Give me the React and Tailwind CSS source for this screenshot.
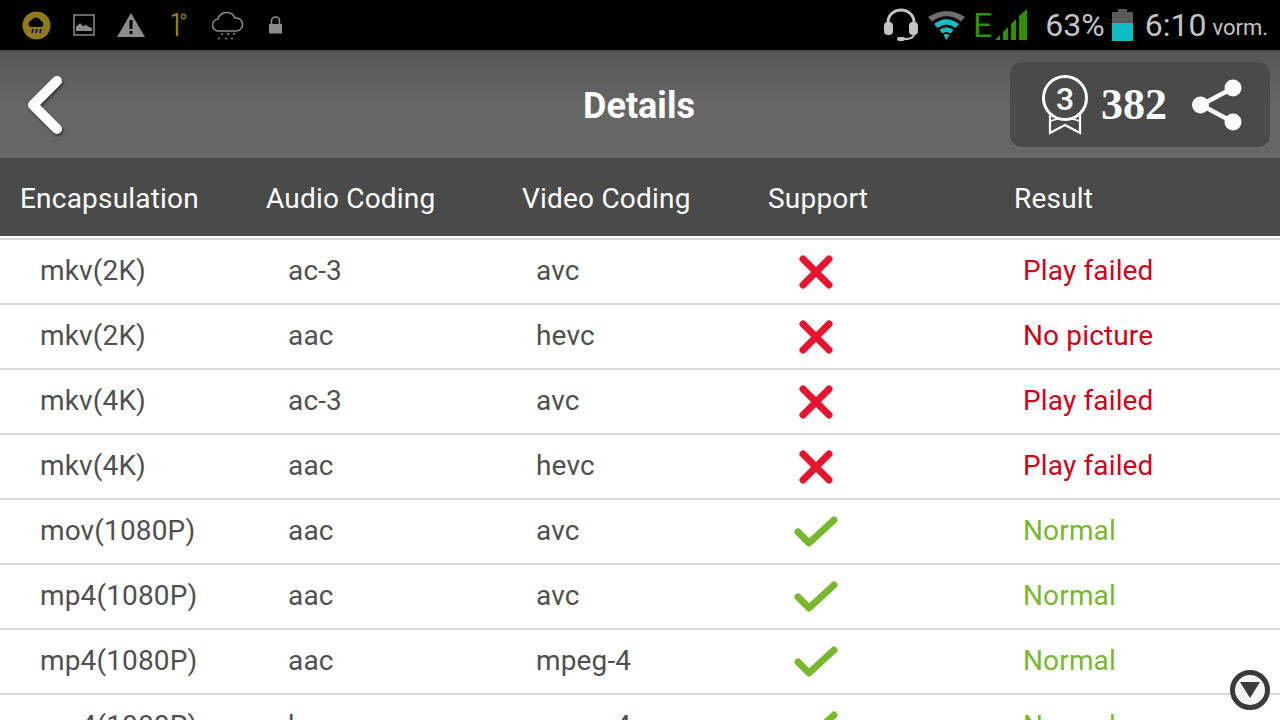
import React from 'react';

const rows = [
  ['mkv(2K)', 'ac-3', 'avc', false, 'Play failed'],
  ['mkv(2K)', 'aac', 'hevc', false, 'No picture'],
  ['mkv(4K)', 'ac-3', 'avc', false, 'Play failed'],
  ['mkv(4K)', 'aac', 'hevc', false, 'Play failed'],
  ['mov(1080P)', 'aac', 'avc', true, 'Normal'],
  ['mp4(1080P)', 'aac', 'avc', true, 'Normal'],
  ['mp4(1080P)', 'aac', 'mpeg-4', true, 'Normal'],
  ['mp4(1080P)', 'he-aac', 'mpeg-4', true, 'Normal'],
];

const Cross = () => (
  <svg width="36" height="36" viewBox="0 0 36 36">
    <path d="M5 5 L31 31 M31 5 L5 31" stroke="#e5142f" strokeWidth="7" strokeLinecap="round" />
  </svg>
);

const Check = () => (
  <svg width="44" height="34" viewBox="0 0 44 34">
    <path d="M4 17 L15 28 L40 5" fill="none" stroke="#77b82e" strokeWidth="7" strokeLinecap="round" strokeLinejoin="round" />
  </svg>
);

const StatusLeft = () => (
  <div className="flex items-center h-full">
    <svg className="ml-[22px]" width="29" height="29" viewBox="0 0 29 29">
      <circle cx="14.5" cy="14.5" r="14" fill="#8f7a1e" />
      <path d="M8 16 a4 4 0 0 1 2-7 a5 5 0 0 1 9 1 a3.5 3.5 0 0 1 1 6 Z" fill="#000" />
      <path d="M11 18 l-1 4 M15 18 l-1 4 M19 18 l-1 4" stroke="#000" strokeWidth="1.5" />
    </svg>
    <svg className="ml-[22px]" width="22" height="22" viewBox="0 0 22 22">
      <rect x="1" y="1" width="20" height="20" fill="none" stroke="#8c8c8c" strokeWidth="1.5" />
      <path d="M3 17 L3 13 L7 9 L10 12 L13 11 L16 13 L19 14 L19 17 Z" fill="#8c8c8c" />
    </svg>
    <svg className="ml-[22px]" width="28" height="25" viewBox="0 0 28 25">
      <path d="M14 0 L28 24 L0 24 Z" fill="#8c8c8c" />
      <rect x="12.5" y="7" width="3" height="9" fill="#000" />
      <rect x="12.5" y="18" width="3" height="3" fill="#000" />
    </svg>
    <svg className="ml-[26px]" width="16" height="24" viewBox="0 0 16 24">
      <path d="M1 3 L6 1 L6 23" fill="none" stroke="#8f7a1e" strokeWidth="2.4" />
      <circle cx="12.5" cy="3.5" r="2.2" fill="none" stroke="#8f7a1e" strokeWidth="1.4" />
    </svg>
    <svg className="ml-[25px]" width="32" height="30" viewBox="0 0 32 30">
      <path d="M7 21 a6 6 0 0 1-1-12 a9 9 0 0 1 17 -1 a6.5 6.5 0 0 1 2 13 Z" fill="none" stroke="#8c8c8c" strokeWidth="1.5" />
      <path d="M9 24 h2 M15 24 h2 M21 24 h2 M6 28.500 h2 M13 28.500 h2 M19 28.500 h2" stroke="#8c8c8c" strokeWidth="1.6" />
    </svg>
    <svg className="ml-[24px]" width="15" height="18" viewBox="0 0 15 18">
      <path d="M3.500 8 V5 a4 4 0 0 1 8 0 V8" fill="none" stroke="#8c8c8c" strokeWidth="1.6" />
      <rect x="1" y="8" width="13" height="9.500" fill="#8c8c8c" />
    </svg>
  </div>
);

const StatusRight = () => (
  <div className="flex items-center h-full">
    <svg width="36" height="34" viewBox="0 0 36 34">
      <path d="M5 18 V14 a13 12 0 0 1 26 0 V18" fill="none" stroke="#c4c4c4" strokeWidth="3" />
      <rect x="1" y="14" width="9" height="13" rx="4" fill="#c4c4c4" />
      <rect x="26" y="14" width="9" height="13" rx="4" fill="#c4c4c4" />
      <path d="M31 26 q0 4 -7 5 h-6" fill="none" stroke="#c4c4c4" strokeWidth="2" />
      <rect x="14" y="29" width="8" height="4" rx="2" fill="#c4c4c4" />
    </svg>
    <svg className="ml-[8px]" width="39" height="31" viewBox="0 0 39 31">
      <path d="M1 7 Q19.500 -5 38 7 L34 11.500 Q19.500 1 5 11.500 Z" fill="#6e6e6e" />
      <path d="M7 14 Q19.500 4.500 32 14 L28.500 18 Q19.500 11 10.500 18 Z" fill="#14bcc4" />
      <path d="M12.500 20 Q19.500 14.500 26.500 20 L23.500 23.500 Q19.500 20.500 15.500 23.500 Z" fill="#14bcc4" />
      <path d="M16.500 25 Q19.500 23 22.500 25 L19.500 30 Z" fill="#14bcc4" />
    </svg>
    <span className="ml-[7px] text-[34px] leading-none text-[#2f8f06]">E</span>
    <svg className="ml-[3px]" width="33" height="32" viewBox="0 0 33 32">
      <path d="M0 31 L5 26 V31 Z M8 31 V23 L13 18 V31 Z M16 31 V15 L21 10 V31 Z M24 31 V7 L32 0 V31 Z" fill="#2f8f06" />
    </svg>
    <span className="ml-[17px] text-[32px] leading-none text-[#c4c4c4]">63%</span>
    <svg className="ml-[7px]" width="21" height="32" viewBox="0 0 21 32">
      <rect x="6" y="0" width="9" height="4" fill="#5a5a5a" />
      <rect x="0" y="3" width="21" height="11" fill="#5a5a5a" />
      <rect x="0" y="14" width="21" height="18" fill="#0fbcc0" />
    </svg>
    <span className="ml-[12px] text-[32px] leading-none text-[#c4c4c4]">6:10</span>
    <span className="ml-[6px] mt-[5px] mr-[12px] text-[22px] leading-none text-[#c4c4c4]">vorm.</span>
  </div>
);

const Medal = () => (
  <svg width="48" height="60" viewBox="0 0 48 60">
    <path d="M9 38 V58 L24 50 L39 58 V38" fill="none" stroke="#fff" strokeWidth="2.2" />
    <path d="M9 46 L24 42 L39 46" fill="none" stroke="#fff" strokeWidth="1.500" />
    <circle cx="24" cy="23" r="21.500" fill="#4a4a4a" stroke="#fff" strokeWidth="3" />
    <text x="24" y="34.500" textAnchor="middle" fontSize="32" fontWeight="500" fontFamily="Roboto, sans-serif" fill="#fff">3</text>
  </svg>
);

const Share = () => (
  <svg width="50" height="54" viewBox="0 0 50 54">
    <path d="M41 10 L9 27 L41 44" fill="none" stroke="#fff" strokeWidth="4.500" />
    <circle cx="41" cy="10" r="8.500" fill="#fff" />
    <circle cx="8.500" cy="27" r="8.500" fill="#fff" />
    <circle cx="41" cy="44" r="8.500" fill="#fff" />
  </svg>
);

const textCell = 'pb-[2px] tracking-[0.15px]';

export default function App() {
  return (
    <div className="w-[1280px] h-[720px] overflow-hidden relative bg-white font-['Roboto',sans-serif]">
      <div className="h-[50px] bg-black flex items-center justify-between">
        <StatusLeft />
        <StatusRight />
      </div>

      <div className="h-[108px] flex items-center relative bg-gradient-to-b from-[#575757] via-[#666666] to-[#676767] border-t-2 border-[#4a4a4a]">
        <svg className="ml-[26px] drop-shadow-[1px_2px_1px_rgba(0,0,0,0.5)]" width="40" height="62" viewBox="0 0 40 62">
          <path d="M31 7 L7 31 L31 55" fill="none" stroke="#fff" strokeWidth="10" strokeLinecap="round" strokeLinejoin="round" />
        </svg>
        <div className="flex-1 pt-[2px] text-center text-white text-[36px] font-bold -ml-[68px]">Details</div>
        <div className="absolute left-[1010px] top-[10px] w-[260px] h-[85px] rounded-xl bg-[#4a4a4a] flex items-center">
          <div className="ml-[31px]"><Medal /></div>
          <span className="ml-[12px] text-[44px] font-bold text-white font-['Liberation_Serif',serif]">382</span>
          <div className="ml-[25px]"><Share /></div>
        </div>
      </div>

      <div className="h-[78px] pt-[4px] bg-[#4a4a4a] grid grid-cols-[246px_256px_246px_246px_1fr] pl-[20px] items-center text-white text-[28px] tracking-[0.2px]">
        <div>Encapsulation</div>
        <div>Audio Coding</div>
        <div>Video Coding</div>
        <div>Support</div>
        <div>Result</div>
      </div>

      <div className="h-[2px] bg-white" />
      <div className="h-[2px] bg-[#d8d8d8]" />

      {rows.map((r, i) => (
        <div key={i} className="h-[65px] border-b-2 border-[#d8d8d8] grid grid-cols-[248px_248px_234px_253px_1fr] pl-[40px] items-center text-[28px] text-[#505050]">
          <div className={textCell}>{r[0]}</div>
          <div className={textCell}>{r[1]}</div>
          <div className={textCell}>{r[2]}</div>
          <div className="flex justify-center w-[92px]">{r[3] ? <Check /> : <Cross />}</div>
          <div className={`${textCell} ${r[3] ? 'text-[#77b82e]' : 'text-[#d0021b]'}`}>{r[4]}</div>
        </div>
      ))}

      <div className="absolute left-[1230px] top-[670px] w-[40px] h-[40px] rounded-full border-[5px] border-[#3a3a3a] bg-[#f4f4f4] flex items-center justify-center">
        <svg width="20" height="16" viewBox="0 0 20 16">
          <path d="M0 0 H20 L10 16 Z" fill="#3a3a3a" />
        </svg>
      </div>
    </div>
  );
}
